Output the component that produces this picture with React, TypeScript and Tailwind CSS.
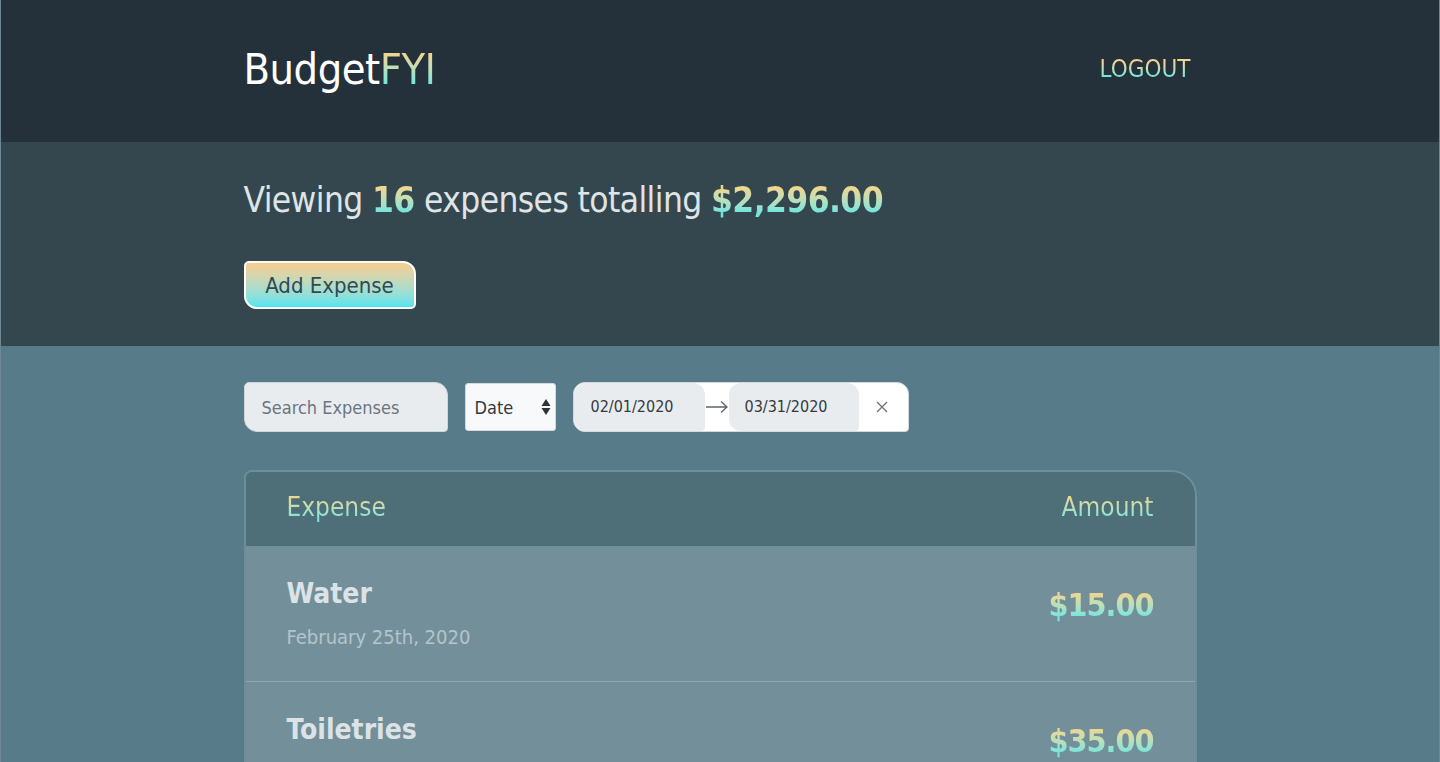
import React from "react";

const font = "font-[family-name:'DejaVu_Sans_Condensed','DejaVu_Sans',sans-serif]";
const grad = "bg-gradient-to-b from-[#efd690] from-20% to-[#70e6de] to-80% bg-clip-text text-transparent";

const expenses = [
  { name: "Water", date: "February 25th, 2020", amount: "$15.00" },
  { name: "Toiletries", date: "February 22nd, 2020", amount: "$35.00" },
  { name: "Groceries", date: "February 20th, 2020", amount: "$120.00" },
];

export default function App() {
  return (
    <div className={`${font} min-h-screen bg-[#587b8a] border-x border-[#6d8894]`}>
      <header className="h-[142px] bg-[#25313a]">
        <div className="mx-auto flex h-full w-[953px] items-center justify-between pb-1">
          <h1 className="text-[43px] leading-none tracking-[-0.5px] text-white">
            Budget<span className={grad}>FYI</span>
          </h1>
          <button className={`${grad} pr-[6px] text-[24px] leading-none`}>LOGOUT</button>
        </div>
      </header>

      <section className="h-[204px] bg-[#34474f]">
        <div className="mx-auto w-[953px] pt-[37px]">
          <h2 className="text-[35px] leading-[42px] tracking-[-0.6px] text-[#dfe4e7]">
            Viewing <span className={`${grad} font-bold`}>16</span> expenses totalling{" "}
            <span className={`${grad} font-bold`}>$2,296.00</span>
          </h2>
          <button className="mt-[40px] flex h-[48px] w-[172px] items-center justify-center rounded-tl-[5px] rounded-tr-[13px] rounded-br-[5px] rounded-bl-[13px] border-2 border-white bg-gradient-to-b from-[#f8cd8e] to-[#4fe4f1] text-[22px] text-[#2f4a55]">
            Add Expense
          </button>
        </div>
      </section>

      <main className="mx-auto w-[953px] pt-[36px] pb-10">
        <div className="flex items-center gap-[17px]">
          <div className="flex h-[50px] w-[204px] items-center rounded-tl-[5px] rounded-tr-[13px] rounded-br-[4px] rounded-bl-[13px] border border-[#cfd6da] bg-[#e9ecef] px-[17px] text-[18px] text-[#6c757d]">
            Search Expenses
          </div>
          <div className="flex h-[48px] w-[91px] items-center justify-between rounded-[3px] border border-[#d5d9dc] bg-[#f8f9fa] pl-[9px] pr-[4px] text-[18px] text-[#343a40]">
            <span>Date</span>
            <svg width="10" height="20" viewBox="0 0 10 20">
              <path d="M5 2 L9.5 9 L0.5 9 Z" fill="#2f3437" />
              <path d="M0.5 11 L9.5 11 L5 18 Z" fill="#2f3437" />
            </svg>
          </div>
          <div className="flex h-[50px] w-[336px] items-center rounded-tl-[12px] rounded-tr-[12px] rounded-br-[4px] rounded-bl-[12px] border border-[#d5d9dc] bg-white text-[16px] text-[#343a40]">
            <div className="flex h-full w-[131px] items-center rounded-tl-[12px] rounded-tr-[12px] rounded-br-[4px] rounded-bl-[12px] bg-[#e9ecef] pl-[17px]">
              02/01/2020
            </div>
            <svg width="24" height="14" viewBox="0 0 24 14">
              <path d="M1 7 H22 M16 1.5 L22 7 L16 12.5" fill="none" stroke="#5f6468" strokeWidth="1.3" />
            </svg>
            <div className="flex h-full w-[130px] items-center rounded-tl-[12px] rounded-tr-[12px] rounded-br-[4px] rounded-bl-[12px] bg-[#e9ecef] pl-[16px]">
              03/31/2020
            </div>
            <svg width="14" height="14" viewBox="0 0 14 14" className="ml-[16px]">
              <path d="M2 2 L12 12 M12 2 L2 12" stroke="#6c7276" strokeWidth="1.3" />
            </svg>
          </div>
        </div>

        <div className="mt-[38px] overflow-hidden rounded-tl-[8px] rounded-tr-[26px] border-2 border-[#6d8f9b]">
          <div className="flex h-[74px] items-center justify-between bg-[#4e6e78] px-[41px] pb-[3px]">
            <span className={`${grad} text-[26px]`}>Expense</span>
            <span className={`${grad} text-[26px]`}>Amount</span>
          </div>
          {expenses.map((e) => (
            <div
              key={e.name}
              className="flex h-[136px] items-start justify-between border-b border-[#8da6af] bg-[#73909a] px-[41px] pt-[30px]"
            >
              <div>
                <div className="text-[28px] font-bold leading-[36px] text-[#dce3e6]">{e.name}</div>
                <div className="mt-[12px] text-[20px] leading-[26px] text-[#b3c4ca]">{e.date}</div>
              </div>
              <div className={`${grad} mt-[9px] text-[32px] font-bold leading-[40px] tracking-[-1px]`}>{e.amount}</div>
            </div>
          ))}
        </div>
      </main>
    </div>
  );
}
